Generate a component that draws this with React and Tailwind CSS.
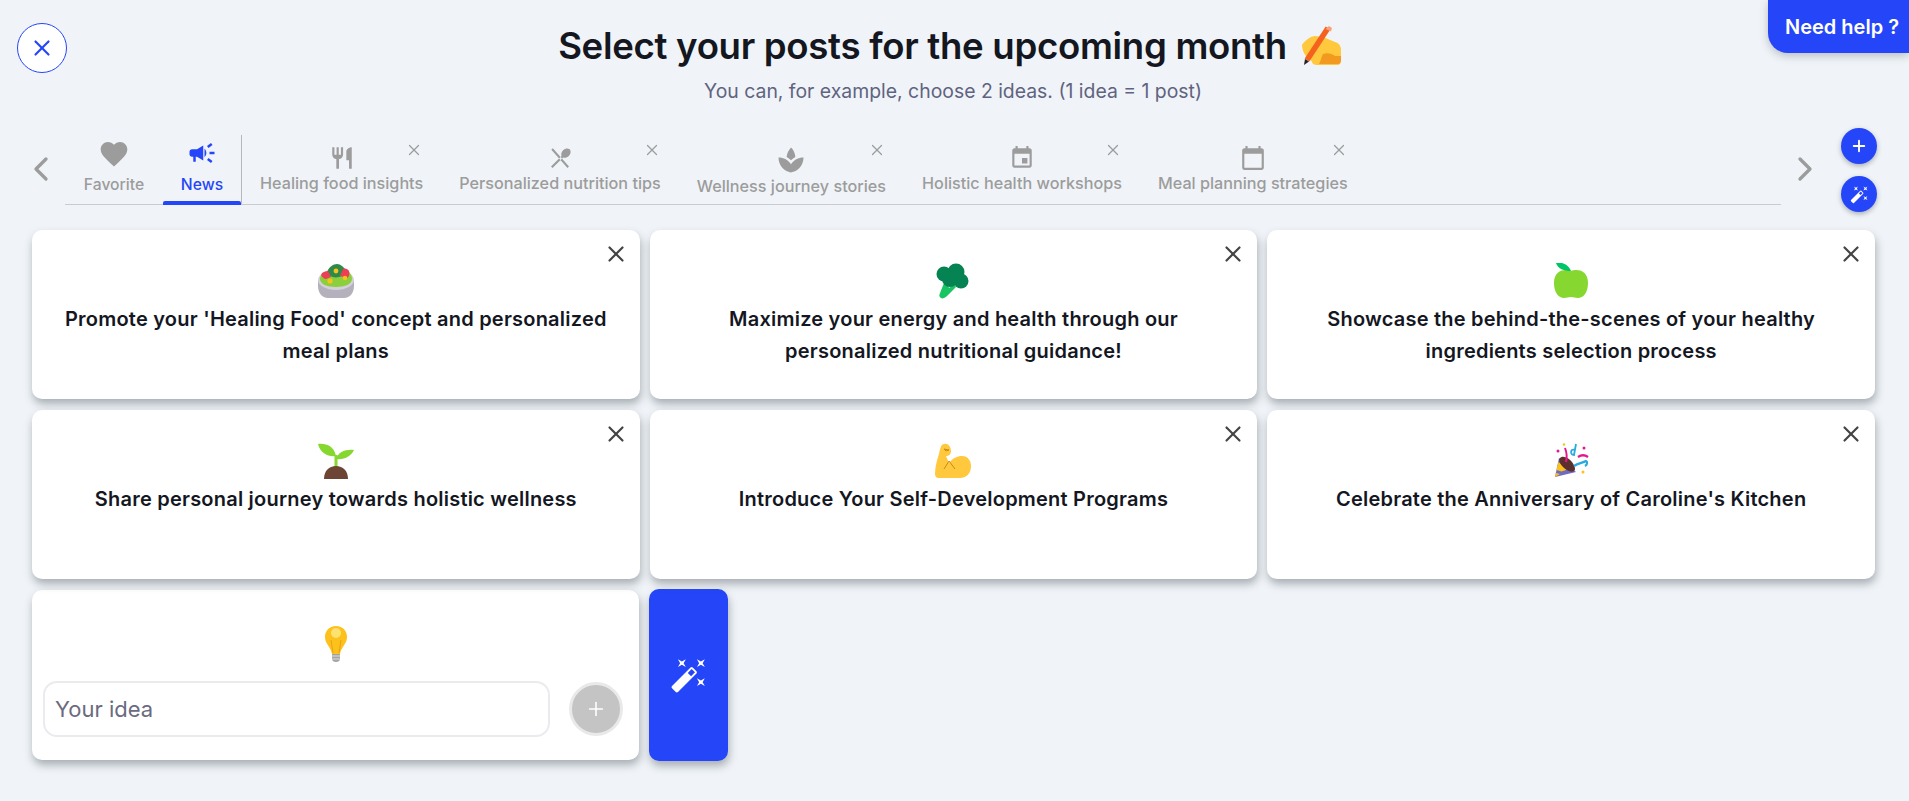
import { Plus, X, ChevronLeft, ChevronRight } from 'lucide-react'

const MATERIAL = {
  heart: 'M12 21.35l-1.45-1.32C5.4 15.36 2 12.28 2 8.5 2 5.42 4.42 3 7.5 3c1.74 0 3.41.81 4.5 2.09C13.09 3.81 14.76 3 16.5 3 19.58 3 22 5.42 22 8.5c0 3.78-3.4 6.86-8.55 11.54L12 21.35z',
  campaign: 'M18 11v2h4v-2h-4zm-2 6.61c.96.71 2.21 1.65 3.2 2.39.4-.53.8-1.07 1.2-1.6-.99-.74-2.24-1.68-3.2-2.4-.4.54-.8 1.08-1.2 1.61zM20.4 5.6c-.4-.53-.8-1.07-1.2-1.6-.99.74-2.24 1.68-3.2 2.4.4.53.8 1.07 1.2 1.6.96-.72 2.21-1.65 3.2-2.4zM4 9c-1.1 0-2 .9-2 2v2c0 1.1.9 2 2 2h1v4h2v-4h1l5 3V6L8 9H4zm11.5 3c0-1.33-.58-2.53-1.5-3.35v6.69c.92-.81 1.5-2.01 1.5-3.34z',
  restaurant: 'M11 9H9V2H7v7H5V2H3v7c0 2.12 1.66 3.84 3.75 3.97V22h2.5v-9.03C11.34 12.84 13 11.12 13 9V2h-2v7zm5-3v8h2.5v8H21V2c-2.76 0-5 2.24-5 4z',
  menu: 'M4 4.4L5.4 3 20.3 19.9 18.9 21.3zM14.88 11.53c1.53.71 3.68.21 5.27-1.38 1.91-1.91 2.28-4.65.81-6.12-1.46-1.46-4.2-1.1-6.12.81-1.59 1.59-2.09 3.74-1.38 5.27L3.7 19.87l1.41 1.41z',
  spa: 'M15.49 9.63c-.18-2.79-1.31-5.51-3.43-7.63-2.14 2.14-3.32 4.86-3.55 7.63 1.28.68 2.46 1.56 3.49 2.63 1.03-1.06 2.21-1.94 3.49-2.63zM12 15.45C9.85 12.17 6.18 10 2 10c0 5.32 3.36 9.82 8.03 11.49.63.23 1.29.4 1.97.51.68-.12 1.33-.29 1.97-.51C18.64 19.82 22 15.32 22 10c-4.18 0-7.85 2.17-10 5.45z',
  event: 'M17 12h-5v5h5v-5zM16 1v2H8V1H6v2H5c-1.11 0-1.99.9-1.99 2L3 19c0 1.1.89 2 2 2h14c1.1 0 2-.9 2-2V5c0-1.1-.9-2-2-2h-1V1h-2zm3 18H5V8h14v11z',
  calendar: 'M20 3h-1V1h-2v2H7V1H5v2H4c-1.1 0-2 .9-2 2v16c0 1.1.9 2 2 2h16c1.1 0 2-.9 2-2V5c0-1.1-.9-2-2-2zm0 18H4V8h16v13z',
  wand: 'M7.5 5.6L10 7 8.6 4.5 10 2 7.5 3.4 5 2l1.4 2.5L5 7zm12 9.8L17 14l1.4 2.5L17 19l2.5-1.4L22 19l-1.4-2.5L22 14zM22 2l-2.5 1.4L17 2l1.4 2.5L17 7l2.5-1.4L22 7l-1.4-2.5zm-7.63 5.29a.9959.9959 0 0 0-1.41 0L1.29 18.96c-.39.39-.39 1.02 0 1.41l2.34 2.34c.39.39 1.02.39 1.41 0L16.7 11.05c.39-.39.39-1.02 0-1.41l-2.33-2.35zm-1.03 5.49l-2.12-2.12 2.44-2.44 2.12 2.12-2.44 2.44z',
}

function Mi({ name, className }) {
  return (
    <svg viewBox="0 0 24 24" fill="currentColor" className={className}>
      <path d={MATERIAL[name]} />
    </svg>
  )
}

function Salad() {
  return (
    <svg viewBox="0 0 36 36" className="h-[36px] w-[36px]">
      <path d="M0 17h36v6c0 8-5 12-10 12H10C5 35 0 31 0 23z" fill="#b4b0bc" />
      <ellipse cx="18" cy="17" rx="18" ry="10" fill="#d3d0da" />
      <path d="M2 16c0-4 4-6 7-7 3-6 14-9 20-1 3 1 5 4 5 8 0 5-7 8-16 8S2 21 2 16z" fill="#8ccf3d" />
      <path d="M9 9c2-5 6-8 10-8 4 0 6 3 10 7 1 3-2 5-5 5-4 2-10 2-13-1-2 0-3-1-2-3z" fill="#2f8a4a" />
      <path d="M3 12c1-3 4-4 7-4l3 6-5 2c-2 0-4-2-5-4zM31 8c1 3 0 6-2 7l-7-2 3-7c2-1 5 0 6 2z" fill="#ec3f55" />
      <circle cx="18" cy="8" r="2.4" fill="#fcc21b" />
      <circle cx="12" cy="18" r="2.6" fill="#fcc21b" />
      <circle cx="27" cy="15" r="2.2" fill="#fcc21b" />
    </svg>
  )
}

function Broccoli() {
  return (
    <svg viewBox="0 0 36 36" className="h-[36px] w-[36px]">
      <path d="M5 30L9 20l4 2 1 3 5-4 2 3-9 9c-2 2-5 3-6 2-2-1-2-3-1-5z" fill="#19c563" />
      <circle cx="9" cy="11" r="7.5" fill="#058353" />
      <circle cx="21" cy="9" r="8.5" fill="#058353" />
      <circle cx="26" cy="18" r="7.5" fill="#058353" />
      <circle cx="15" cy="16" r="8" fill="#058353" />
    </svg>
  )
}

function Apple() {
  return (
    <svg viewBox="0 0 36 36" className="h-[36px] w-[36px]">
      <path d="M18 8c5-2 17-2 17 12 0 10-5 15-10 15-3 0-4-1-7-1s-4 1-7 1c-5 0-10-5-10-15C1 6 13 6 18 8z" fill="#86d72f" />
      <path d="M3 0c6-1 12 1 15 8-7 0-13-2-15-8z" fill="#00c566" />
    </svg>
  )
}

function Seedling() {
  return (
    <svg viewBox="0 0 36 36" className="h-[36px] w-[36px]">
      <path d="M16.5 12h3v16h-3z" fill="#86d72f" />
      <path d="M0 1c8-1 16 2 18 12C10 14 2 10 0 1zM36 7c-3 6-9 10-18 9 2-7 10-10 18-9z" fill="#86d72f" />
      <path d="M6 36c0-8 5-13 12-13s12 5 12 13z" fill="#6d4534" />
    </svg>
  )
}

function Biceps() {
  return (
    <svg viewBox="0 0 36 36" className="h-[36px] w-[36px]">
      <path d="M0 31C0 24 2 17 4 11 5 6 6 1 9 1c4-1 7 3 7 7 0 3-2 5-5 5l3 7c4-5 8-7 13-7 6 0 9 5 9 10 0 8-5 12-11 12H4c-3 0-4-2-4-4z" fill="#ffc83d" />
      <path d="M9 6l5 1-3 1zM14 18l-5 8M14 18l6 8" stroke="#c98a1a" strokeWidth="1" fill="none" />
    </svg>
  )
}

function Party() {
  return (
    <svg viewBox="0 0 36 36" className="h-[36px] w-[36px]">
      <path d="M2 34L6 15l17 14z" fill="#6f6bc0" />
      <path d="M3.5 27l2-8 9 7.5-6 2zM2 34l1-4 4 1z" fill="#fcc21b" />
      <path d="M7 15c3-3 9 0 12 4 3 4 4 8 2 9-3 2-8-1-11-4S5 17 7 15z" fill="#5c2f2f" />
      <path d="M12 5c2 5 2 10 1 14" stroke="#e5178f" strokeWidth="2" fill="none" />
      <path d="M25 14c3-2 7-2 10 0" stroke="#e5178f" strokeWidth="2.4" fill="none" />
      <path d="M21 23c4-3 9-3 12-5 2 1 1 4-1 5" stroke="#29a9e0" strokeWidth="2.2" fill="none" />
      <path d="M23 1l-2 11c-3 0-4-3-2-5l4-1" stroke="#29a9e0" strokeWidth="1.8" fill="none" />
      <circle cx="5" cy="8" r="1.5" fill="#e5178f" />
      <circle cx="11" cy="1.5" r="1.3" fill="#fcc21b" />
      <circle cx="31" cy="5" r="1.5" fill="#e5178f" />
      <circle cx="30" cy="29" r="1.5" fill="#fcc21b" />
    </svg>
  )
}

function Bulb() {
  return (
    <svg viewBox="0 0 36 36" className="h-[36px] w-[36px]">
      <path d="M18 0c7 0 11 5 11 11 0 7-6 10-7 17h-8c-1-7-7-10-7-17C7 5 11 0 18 0z" fill="#fcc21b" />
      <circle cx="18" cy="7" r="5" fill="#fde272" />
      <path d="M15 27l-2-13M21 27l2-13" stroke="#e9a11a" strokeWidth="1" fill="none" />
      <path d="M14 28h8v5c0 2-2 3-4 3s-4-1-4-3z" fill="#a3a3a3" />
      <path d="M14 30h8M14 33h8" stroke="#e0e0e0" strokeWidth="1" />
    </svg>
  )
}

function WritingHand() {
  return (
    <svg viewBox="0 0 42 40" className="h-[40px] w-[42px]">
      <path d="M1 19c2-4 9-9 13-9l8 1 12 5c4 1 6 4 6 8v10c0 3-1 5-4 5H16c-3 0-5-2-5-3 0-1-2-2-4-4-3-2-6-8-6-13z" fill="#ffc83d" />
      <path d="M22 28c5-2 10 0 12 2h6v4c0 2-1 4-3 4H18c2-3 2-7 4-10z" fill="#f29a1f" />
      <path d="M27 2L6 34" stroke="#f4621f" strokeWidth="5.5" fill="none" />
      <path d="M24.5 3l3.5-3 3 2-1 3.5z" fill="#f9a07a" />
      <path d="M3 39l1-6 4 2.5z" fill="#222" />
    </svg>
  )
}

const TABS = [
  { label: 'Healing food insights', icon: 'restaurant', size: 'h-[26px] w-[26px]' },
  { label: 'Personalized nutrition tips', icon: 'menu', size: 'h-[26px] w-[26px]' },
  { label: 'Wellness journey stories', icon: 'spa', size: 'h-[30px] w-[30px] mb-[-4px]', low: true },
  { label: 'Holistic health workshops', icon: 'event', size: 'h-[26px] w-[26px]' },
  { label: 'Meal planning strategies', icon: 'calendar', size: 'h-[26px] w-[26px]' },
]

const IDEAS = [
  { icon: Salad, text: "Promote your 'Healing Food' concept and personalized meal plans" },
  { icon: Broccoli, text: 'Maximize your energy and health through our personalized nutritional guidance!' },
  { icon: Apple, text: 'Showcase the behind-the-scenes of your healthy ingredients selection process' },
  { icon: Seedling, text: 'Share personal journey towards holistic wellness' },
  { icon: Biceps, text: 'Introduce Your Self-Development Programs' },
  { icon: Party, text: "Celebrate the Anniversary of Caroline's Kitchen" },
]

function IdeaCard({ icon: Icon, text }) {
  return (
    <div className="relative flex h-[169px] flex-col items-center rounded-[10px] bg-white px-[24px] pt-[33px] shadow-[1px_5px_9px_rgba(50,60,70,0.38)]">
      <button type="button" className="absolute right-[11px] top-[11px] text-[#444]">
        <X size={26} strokeWidth={2} />
      </button>
      <Icon />
      <p className="mt-[5px] text-center text-[20px] font-semibold leading-[31.5px] tracking-[0.22px] text-[#14171f]">{text}</p>
    </div>
  )
}

export default function App() {
  return (
    <div className="relative min-h-screen overflow-hidden bg-[#f0f4f8] font-['Inter','Noto_Sans',sans-serif]">
      <a className="absolute right-0 top-0 flex h-[53px] w-[141px] items-center rounded-bl-[20px] bg-[#2546f8] pl-[17px] text-[20px] font-semibold text-white shadow-[0_3px_8px_rgba(60,70,85,0.3)]">
        Need help ?
      </a>

      <header className="relative flex h-[135px] flex-col items-center pt-[20px] pr-[8px]">
        <button
          type="button"
          className="absolute left-[17px] top-[23px] flex h-[50px] w-[50px] items-center justify-center rounded-full border border-[#2546f8] bg-white text-[#2546f8]"
        >
          <X size={26} strokeWidth={2} />
        </button>
        <h1 className="flex h-[52px] items-center gap-[14px] text-[36.6px] font-semibold tracking-[-0.3px] text-[#14171f]">
          Select your posts for the upcoming month
          <WritingHand />
        </h1>
        <p className="mt-[6px] pl-[5px] text-[19.4px] leading-[26px] text-[#5f6380]">You can, for example, choose 2 ideas. (1 idea = 1 post)</p>
      </header>

      <div className="flex h-[78px] items-start pl-[17px]">
        <button type="button" className="mt-[14px] flex h-[40px] w-[48px] shrink-0 items-center justify-center text-[#9c9c9c]">
          <ChevronLeft size={40} strokeWidth={2} />
        </button>
        <div className="flex h-[70px] w-[1716px] shrink-0 items-stretch border-b border-[#c8ccd0]">
          <div className="relative flex w-[98px] flex-col items-center pt-[3px] text-[#9c9c9c]">
            <Mi name="heart" className="h-[32px] w-[32px]" />
            <span className="mt-[3px] text-[15.7px] font-medium leading-[24px]">Favorite</span>
          </div>
          <div className="relative flex w-[79px] flex-col items-center border-r border-[#b5b9be] pt-[3px] text-[#2546f8]">
            <Mi name="campaign" className="h-[30px] w-[30px]" />
            <span className="mt-[5px] text-[15.7px] font-medium leading-[24px]">News</span>
            <span className="absolute inset-x-0 bottom-[-1px] h-[4px] rounded-t-[2px] bg-[#2546f8]" />
          </div>
          {TABS.map((tab) => (
            <div key={tab.label} className="relative flex flex-col items-center px-[18px] text-[#9c9c9c]">
              <X size={18} strokeWidth={1.6} className="absolute right-[18px] top-[6px]" />
              <div className="flex h-[36px] items-end">
                <Mi name={tab.icon} className={tab.size} />
              </div>
              <span className={`text-[16.2px] font-medium leading-[24px] ${tab.low ? 'mt-[3px]' : ''}`}>{tab.label}</span>
            </div>
          ))}
        </div>
        <button type="button" className="mt-[14px] flex h-[40px] w-[48px] shrink-0 items-center justify-center text-[#9c9c9c]">
          <ChevronRight size={40} strokeWidth={2} />
        </button>
        <div className="-mt-[7px] ml-[12px] flex shrink-0 flex-col gap-[12px]">
          <button type="button" className="flex h-[36px] w-[36px] items-center justify-center rounded-full bg-[#2546f8] text-white shadow-[0_2px_5px_rgba(60,70,85,0.4)]">
            <Plus size={18} strokeWidth={2.5} />
          </button>
          <button type="button" className="flex h-[36px] w-[36px] items-center justify-center rounded-full bg-[#2546f8] text-white shadow-[0_2px_5px_rgba(60,70,85,0.4)]">
            <Mi name="wand" className="h-[19px] w-[19px]" />
          </button>
        </div>
      </div>

      <main className="ml-[32px] mt-[17px] grid w-[1843px] grid-cols-3 gap-x-[10px] gap-y-[11px]">
        {IDEAS.map((idea) => (
          <IdeaCard key={idea.text} {...idea} />
        ))}
        <div className="flex gap-[10px]">
          <div className="flex h-[170px] w-[607px] shrink-0 flex-col items-center rounded-[10px] bg-white px-[11px] pt-[36px] shadow-[1px_5px_9px_rgba(50,60,70,0.38)]">
            <Bulb />
            <div className="mt-[19px] flex items-center gap-[19px] self-stretch">
              <input
                placeholder="Your idea"
                className="h-[56px] w-[507px] rounded-[14px] border-2 border-[#ebebef] bg-white px-[10px] text-[22px] outline-none placeholder:text-[#6a6b80]"
              />
              <button type="button" className="flex h-[54px] w-[54px] items-center justify-center rounded-full border-[3px] border-[#e9e9e9] bg-[#c4c4c4] text-white">
                <Plus size={22} strokeWidth={1.75} />
              </button>
            </div>
          </div>
          <button type="button" className="-mt-[1px] flex h-[172px] w-[79px] shrink-0 items-center justify-center rounded-[10px] bg-[#2546f8] text-white shadow-[1px_5px_9px_rgba(50,60,70,0.38)]">
            <Mi name="wand" className="h-[38px] w-[38px]" />
          </button>
        </div>
      </main>
    </div>
  )
}
